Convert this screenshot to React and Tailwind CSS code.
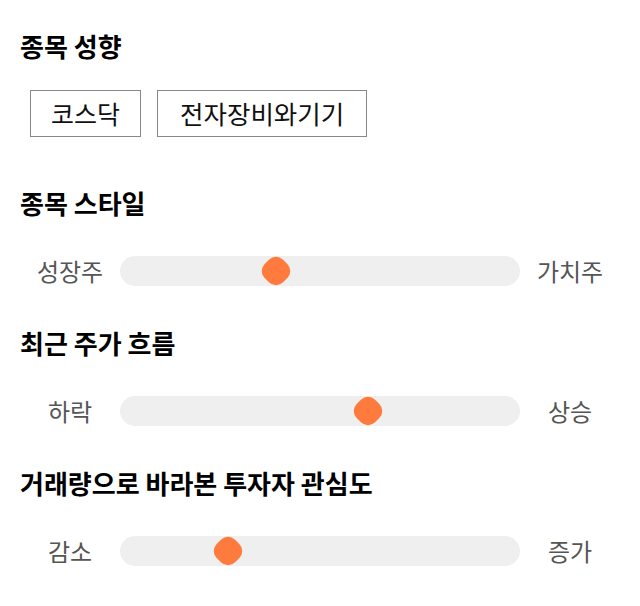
import React from 'react';

const sliders = [
  { title: '종목 스타일', left: '성장주', right: '가치주', value: 39 },
  { title: '최근 주가 흐름', left: '하락', right: '상승', value: 62 },
  { title: '거래량으로 바라본 투자자 관심도', left: '감소', right: '증가', value: 27 },
];

const Slider = ({ left, right, value }) => (
  <div className="flex items-center h-[30px]">
    <div className="w-[100px] text-center text-[24px] text-[#555]">{left}</div>
    <div className="relative flex-1 h-[30px] rounded-full bg-[#efefef]">
      <div
        className="absolute top-[2px] w-[26px] h-[26px] -ml-[13px] rotate-45 rounded-[10px] bg-[#ff7a3d]"
        style={{ left: value + '%' }}
      />
    </div>
    <div className="w-[100px] text-center text-[24px] text-[#555]">{right}</div>
  </div>
);

export default function App() {
  return (
    <div
      className="w-[640px] h-[606px] bg-white px-5 pt-[30px]"
      style={{ fontFamily: '"Noto Sans CJK KR", "Noto Sans", sans-serif' }}
    >
      <h2 className="text-[26px] font-bold leading-[32px] text-black">종목 성향</h2>
      <div className="flex gap-4 pl-[10px] mt-[28px]">
        <div className="h-[47px] px-[20px] flex items-center border border-[#888] text-[25px] text-[#111]">코스닥</div>
        <div className="h-[47px] px-[22px] flex items-center border border-[#888] text-[25.5px] text-[#111]">전자장비와기기</div>
      </div>
      {sliders.map((s, i) => (
        <div key={s.title} className={i === 0 ? 'mt-[50px]' : 'mt-[41px]'}>
          <h2 className="text-[26px] font-bold leading-[32px] text-black">{s.title}</h2>
          <div className="mt-[37px]">
            <Slider left={s.left} right={s.right} value={s.value} />
          </div>
        </div>
      ))}
    </div>
  );
}
